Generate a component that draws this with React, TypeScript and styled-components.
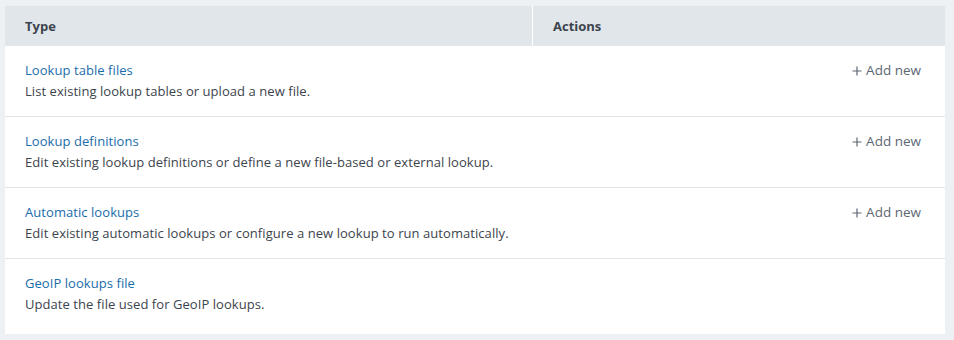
import React from "react";
import styled, { createGlobalStyle } from "styled-components";

const Global = createGlobalStyle`
  html, body { margin: 0; padding: 0; background: #eef1f3; }
  body { font-family: "Open Sans", "Liberation Sans", sans-serif; }
`;

const Page = styled.div`
  padding: 6px 9px 6px 5px;
`;

const Card = styled.div`
  background: #ffffff;
  padding-bottom: 5px;
`;

const Grid = styled.div`
  display: grid;
  grid-template-columns: 527px 1fr;
`;

const HeadCell = styled.div<{ $divider?: boolean }>`
  height: 40px;
  display: flex;
  align-items: center;
  padding: 0 20px;
  background: #e1e6ea;
  font-size: 13px;
  font-weight: 700;
  color: #3c444d;
  border-left: ${(p) => (p.$divider ? "1px solid #ffffff" : "none")};
`;

const Row = styled.div<{ $last?: boolean }>`
  grid-column: 1 / -1;
  display: grid;
  grid-template-columns: 1fr auto;
  padding: 14px 24px 14px 20px;
  border-bottom: ${(p) => (p.$last ? "none" : "1px solid #dfe5ea")};
`;

const Info = styled.div`
  display: flex;
  flex-direction: column;
`;

const Title = styled.a`
  font-size: 13px;
  line-height: 21px;
  letter-spacing: 0.06px;
  color: #1a6dab;
  text-decoration: none;
  cursor: pointer;
`;

const Desc = styled.div`
  font-size: 13px;
  line-height: 21px;
  letter-spacing: 0.06px;
  color: #3c444d;
`;

const AddNew = styled.a`
  display: flex;
  align-items: center;
  gap: 4px;
  height: 21px;
  font-size: 13.5px;
  line-height: 21px;
  color: #5c6773;
  text-decoration: none;
  cursor: pointer;
  white-space: nowrap;
`;

const PlusIcon = styled.svg`
  width: 10px;
  height: 10px;
  flex: none;
  margin-top: 1px;
`;

const Plus = () => (
  <PlusIcon viewBox="0 0 10 10" aria-hidden="true">
    <path d="M5 0.5V9.5M0.5 5H9.5" stroke="#5c6773" strokeWidth="1.2" fill="none" />
  </PlusIcon>
);

const rows = [
  { title: "Lookup table files", desc: "List existing lookup tables or upload a new file.", add: true },
  { title: "Lookup definitions", desc: "Edit existing lookup definitions or define a new file-based or external lookup.", add: true },
  { title: "Automatic lookups", desc: "Edit existing automatic lookups or configure a new lookup to run automatically.", add: true },
  { title: "GeoIP lookups file", desc: "Update the file used for GeoIP lookups.", add: false },
];

export default function App() {
  return (
    <>
      <Global />
      <Page>
        <Card>
          <Grid>
            <HeadCell>Type</HeadCell>
            <HeadCell $divider>Actions</HeadCell>
            {rows.map((r, i) => (
              <Row key={r.title} $last={i === rows.length - 1}>
                <Info>
                  <Title>{r.title}</Title>
                  <Desc>{r.desc}</Desc>
                </Info>
                {r.add ? (
                  <AddNew>
                    <Plus />
                    Add new
                  </AddNew>
                ) : (
                  <span />
                )}
              </Row>
            ))}
          </Grid>
        </Card>
      </Page>
    </>
  );
}
